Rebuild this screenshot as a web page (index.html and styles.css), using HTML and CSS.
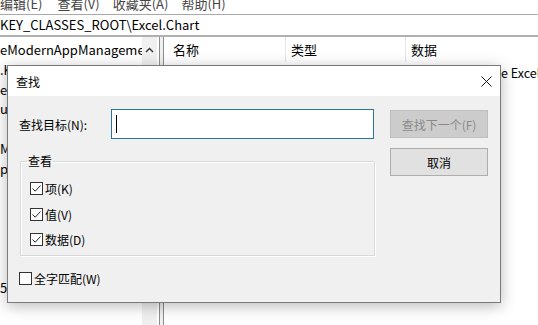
FILE: index.html
```html
<!DOCTYPE html>
<html lang="zh-CN">
<head>
    <meta charset="UTF-8">
    <title>注册表编辑器 - 查找</title>
    <link rel="stylesheet" href="styles.css">
</head>
<body>

    <div class="app">
        <div class="menubar">
            <div class="menu-items">
                <span>编辑(E)</span>
                <span>查看(V)</span>
                <span>收藏夹(A)</span>
                <span>帮助(H)</span>
            </div>
        </div>
        <div class="address">KEY_CLASSES_ROOT\Excel.Chart</div>

        <div class="panes">
            <div class="tree">
                <div class="tree-list">
                    <div class="node">eModernAppManagement</div>
                    <div class="node">.K</div>
                    <div class="node">e</div>
                    <div class="node">u</div>
                    <div class="node"></div>
                    <div class="node">M</div>
                    <div class="node">p</div>
                    <div class="node"></div>
                    <div class="node"></div>
                    <div class="node"></div>
                    <div class="node"></div>
                    <div class="node"></div>
                    <div class="node">5</div>
                </div>
                <div class="vscroll">
                    <svg class="arrow" width="9" height="6" viewBox="0 0 9 6">
                        <polyline points="1,5 4.5,1.5 8,5" fill="none" stroke="#333" stroke-width="1.4"/>
                    </svg>
                </div>
            </div>
            <div class="splitter"></div>
            <div class="list">
                <div class="list-head">
                    <div class="col col-name">名称</div>
                    <div class="col col-type">类型</div>
                    <div class="col col-data">数据</div>
                </div>
                <div class="list-row">
                    <div class="col col-name"></div>
                    <div class="col col-type"></div>
                    <div class="col col-data"><span class="hidden-part"></span>e Excel</div>
                </div>
            </div>
        </div>
    </div>

    <!-- 查找 dialog, floating over the editor -->
    <div class="dialog">
        <div class="titlebar">
            <span>查找</span>
            <svg class="close" width="11" height="11" viewBox="0 0 11 11">
                <path d="M0.5 0.5 L10.5 10.5 M10.5 0.5 L0.5 10.5" stroke="#111" stroke-width="1"/>
            </svg>
        </div>
        <div class="dialog-body">
            <div class="left">
                <div class="find-row">
                    <label class="find-label">查找目标(N):</label>
                    <div class="textbox"><span class="caret"></span></div>
                </div>

                <fieldset class="group">
                    <legend>查看</legend>
                    <div class="group-body">
                        <div class="check">
                            <span class="box"><svg width="11" height="11" viewBox="0 0 11 11"><polyline points="1.5,5.5 4.2,8.2 9.5,2.5" fill="none" stroke="#222" stroke-width="1"/></svg></span>
                            <span>项(K)</span>
                        </div>
                        <div class="check">
                            <span class="box"><svg width="11" height="11" viewBox="0 0 11 11"><polyline points="1.5,5.5 4.2,8.2 9.5,2.5" fill="none" stroke="#222" stroke-width="1"/></svg></span>
                            <span>值(V)</span>
                        </div>
                        <div class="check">
                            <span class="box"><svg width="11" height="11" viewBox="0 0 11 11"><polyline points="1.5,5.5 4.2,8.2 9.5,2.5" fill="none" stroke="#222" stroke-width="1"/></svg></span>
                            <span>数据(D)</span>
                        </div>
                    </div>
                </fieldset>

                <div class="check whole-word">
                    <span class="box"></span>
                    <span>全字匹配(W)</span>
                </div>
            </div>

            <div class="right">
                <button class="btn btn-disabled">查找下一个(F)</button>
                <button class="btn">取消</button>
            </div>
        </div>
    </div>

</body>
</html>
```

FILE: styles.css
```css
body {
    margin: 0;
    width: 538px;
    height: 325px;
    overflow: hidden;
    background: #fff;
    font-family: "Noto Sans CJK SC", "Noto Sans", sans-serif;
    font-size: 12px;
    color: #000;
    position: relative;
}

/* editor behind the dialog */
.app {
    height: 325px;
    display: flex;
    flex-direction: column;
}
.menubar {
    height: 14px;
    overflow: hidden;
    border-bottom: 1px solid #a8a8a8;
}
.menu-items {
    display: flex;
    gap: 13px;
    margin-top: -6px;
    font-size: 13px;
    line-height: 20px;
    color: #444;
}
.menu-items span:first-child {
    margin-right: 2px;
}
.address {
    height: 20px;
    line-height: 20px;
    font-size: 13px;
    border-bottom: 2px solid #b0b0b0;
    white-space: nowrap;
}
.panes {
    flex: 1;
    display: flex;
    font-size: 13px;
}
.tree {
    width: 159px;
    display: flex;
}
.tree-list {
    width: 142px;
    padding-top: 3px;
    overflow: hidden;
}
.node {
    height: 19.8px;
    line-height: 19.8px;
    white-space: nowrap;
    overflow: hidden;
}
.vscroll {
    width: 15px;
    background: #f0f0f0;
    display: flex;
    justify-content: center;
    padding-top: 10px;
}
.arrow {
    display: block;
}
.splitter {
    width: 3px;
    background: #f0f0f0;
    border-left: 1px solid #8c8c8c;
    border-right: 1px solid #8c8c8c;
}
.list {
    flex: 1;
    overflow: hidden;
}
.list-head,
.list-row {
    display: flex;
    white-space: nowrap;
}
.list-head {
    height: 25px;
    line-height: 26px;
}
.list-row {
    line-height: 22px;
    font-size: 12.5px;
}
.col {
    flex: none;
    box-sizing: border-box;
}
.col-name {
    width: 122px;
    padding-left: 9px;
}
.col-type {
    width: 120px;
    padding-left: 5px;
}
.col-data {
    padding-left: 5px;
}
.hidden-part {
    display: inline-block;
    width: 90px;
}
.list-head .col-name,
.list-head .col-type {
    border-right: 1px solid #e5e5e5;
}

/* dialog */
.dialog {
    position: absolute;
    left: 7px;
    top: 65px;
    width: 494px;
    height: 238px;
    box-sizing: border-box;
    border: 1px solid #7a7a7a;
    background: #f0f0f0;
    box-shadow: 0 3px 14px rgba(0, 0, 0, 0.28);
    display: flex;
    flex-direction: column;
}
.titlebar {
    height: 30px;
    background: #fff;
    display: flex;
    align-items: center;
    justify-content: space-between;
    padding: 0 8px;
}
.close {
    display: block;
}
.dialog-body {
    flex: 1;
    display: flex;
    gap: 15px;
    padding: 0 12px 0 11px;
}
.left {
    width: 356px;
}
.find-row {
    margin-top: 13px;
    display: flex;
    align-items: center;
}
.find-label {
    width: 92px;
}
.textbox {
    width: 263px;
    height: 30px;
    box-sizing: border-box;
    border: 1px solid #2d7594;
    background: #fff;
    display: flex;
    align-items: center;
    padding-left: 4px;
}
.caret {
    width: 1px;
    height: 18px;
    background: #000;
}

.group {
    margin: 15px 0 0 1px;
    padding: 0;
    border: 1px solid #d9d9d9;
    box-shadow: inset 1px 1px 0 #fff, 1px 1px 0 #fff;
}
.group legend {
    margin-left: 6px;
    padding: 0 1px;
    line-height: 14px;
}
.group-body {
    padding: 8px 0 2px 9px;
}
.check {
    display: flex;
    align-items: center;
    height: 25.5px;
}
.box {
    width: 13px;
    height: 13px;
    box-sizing: border-box;
    border: 1px solid #333;
    background: #fff;
    margin-right: 2px;
    display: flex;
}
.whole-word {
    margin-top: 13px;
    height: 20px;
}

.right {
    width: 98px;
    padding-top: 14px;
    display: flex;
    flex-direction: column;
    gap: 10px;
}
.btn {
    height: 28px;
    font-family: inherit;
    font-size: 12px;
    background: #e1e1e1;
    border: 1px solid #adadad;
    color: #000;
    padding: 0;
}
.btn-disabled {
    background: #cccccc;
    border-color: #bfbfbf;
    color: #8a8a8a;
}
```
